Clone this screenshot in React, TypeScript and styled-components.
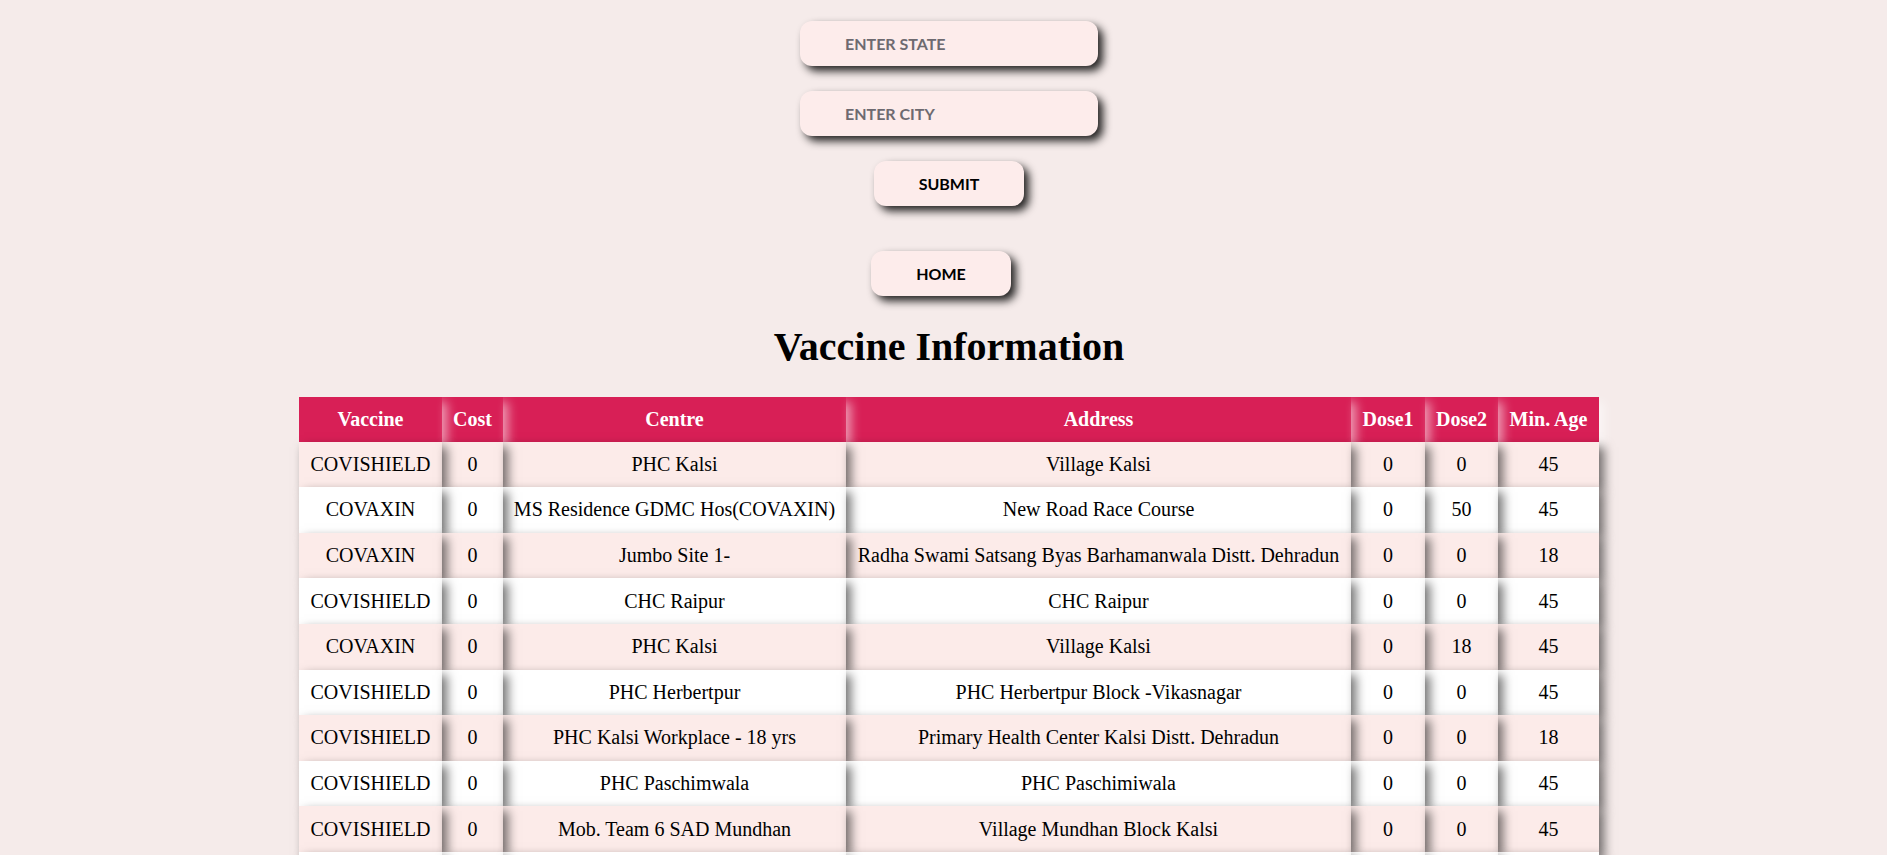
import React from "react";
import styled, { createGlobalStyle } from "styled-components";

const GlobalStyle = createGlobalStyle`
  html, body {
    margin: 0;
    padding: 0;
    background: #f5ebea;
  }
  body {
    font-family: "Liberation Serif", "Times New Roman", serif;
    color: #000;
  }
`;

const Page = styled.div`
  display: flex;
  flex-direction: column;
  align-items: center;
  padding: 21px 0 40px 11px;
`;

const SearchForm = styled.form`
  display: flex;
  flex-direction: column;
  align-items: center;
  gap: 25px;
`;

const Field = styled.input`
  box-sizing: border-box;
  width: 298px;
  height: 45px;
  padding: 0 45px;
  border: none;
  outline: none;
  border-radius: 12px;
  background: #fdeceb;
  box-shadow: 5px 5px 8px rgba(0, 0, 0, 0.85);
  font-family: Lato, "DejaVu Sans", sans-serif;
  font-weight: bold;
  font-size: 16px;
  color: #333;
  &::placeholder {
    color: #6e6a70;
  }
`;

const PillButton = styled.button<{ $top?: number; $shift?: number }>`
  box-sizing: border-box;
  height: 45px;
  padding: 0 45px;
  margin-top: ${({ $top }) => $top ?? 0}px;
  margin-right: ${({ $shift }) => $shift ?? 0}px;
  border: none;
  border-radius: 12px;
  background: #fdeceb;
  box-shadow: 5px 5px 8px rgba(0, 0, 0, 0.85);
  font-family: Lato, "DejaVu Sans", sans-serif;
  font-weight: bold;
  font-size: 16px;
  color: #000;
  cursor: pointer;
`;

const Title = styled.h1`
  font-size: 40px;
  font-weight: bold;
  margin: 0.67em 0;
`;

const Table = styled.table`
  table-layout: fixed;
  width: 1300px;
  border-collapse: collapse;
  font-size: 20px;
`;

const HeadRow = styled.tr`
  background: #d81f56;
`;

const Th = styled.th`
  height: 45px;
  padding: 0;
  color: #fff;
  font-weight: bold;
  text-align: center;
  white-space: nowrap;
  box-shadow: 5px 5px 10px rgba(255, 255, 255, 0.55);
`;

const Row = styled.tr<{ $shade: boolean }>`
  background: ${({ $shade }) => ($shade ? "#fcebe9" : "#ffffff")};
`;

const Td = styled.td`
  height: 45.6px;
  padding: 0;
  text-align: center;
  white-space: nowrap;
  box-shadow: 5px 5px 10px rgba(0, 0, 0, 0.55);
`;

const columns: [string, number][] = [
  ["Vaccine", 143],
  ["Cost", 61],
  ["Centre", 343],
  ["Address", 505],
  ["Dose1", 74],
  ["Dose2", 73],
  ["Min. Age", 101],
];

const sessions = [
  ["COVISHIELD", "0", "PHC Kalsi", "Village Kalsi", "0", "0", "45"],
  ["COVAXIN", "0", "MS Residence GDMC Hos(COVAXIN)", "New Road Race Course", "0", "50", "45"],
  ["COVAXIN", "0", "Jumbo Site 1-", "Radha Swami Satsang Byas Barhamanwala Distt. Dehradun", "0", "0", "18"],
  ["COVISHIELD", "0", "CHC Raipur", "CHC Raipur", "0", "0", "45"],
  ["COVAXIN", "0", "PHC Kalsi", "Village Kalsi", "0", "18", "45"],
  ["COVISHIELD", "0", "PHC Herbertpur", "PHC Herbertpur Block -Vikasnagar", "0", "0", "45"],
  ["COVISHIELD", "0", "PHC Kalsi Workplace - 18 yrs", "Primary Health Center Kalsi Distt. Dehradun", "0", "0", "18"],
  ["COVISHIELD", "0", "PHC Paschimwala", "PHC Paschimiwala", "0", "0", "45"],
  ["COVISHIELD", "0", "Mob. Team 6 SAD Mundhan", "Village Mundhan Block Kalsi", "0", "0", "45"],
  ["COVISHIELD", "0", "UPHC Raipur", "Raipur Dehradun", "0", "0", "45"],
  ["COVAXIN", "0", "CHC Vikasnagar", "Vikasnagar Dehradun", "0", "0", "45"],
];

export default function App() {
  return (
    <>
      <GlobalStyle />
      <Page>
        <SearchForm onSubmit={e => e.preventDefault()}>
          <Field placeholder="ENTER STATE" />
          <Field placeholder="ENTER CITY" />
          <PillButton type="submit">SUBMIT</PillButton>
        </SearchForm>
        <PillButton type="button" $top={45} $shift={16}>HOME</PillButton>
        <Title>Vaccine Information</Title>
        <Table>
          <thead>
            <HeadRow>
              {columns.map(([name, width]) => (
                <Th key={name} style={{ width }}>{name}</Th>
              ))}
            </HeadRow>
          </thead>
          <tbody>
            {sessions.map((s, i) => (
              <Row key={i} $shade={i % 2 === 0}>
                {s.map((v, j) => <Td key={j}>{v}</Td>)}
              </Row>
            ))}
          </tbody>
        </Table>
      </Page>
    </>
  );
}
